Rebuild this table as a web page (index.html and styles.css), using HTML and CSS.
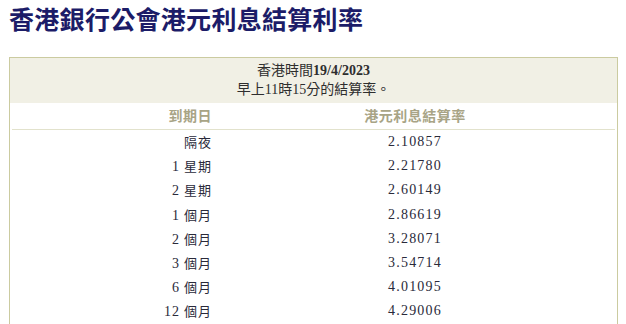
FILE: index.html
```html
<!DOCTYPE html>
<html lang="zh-Hant">
<head>
<meta charset="utf-8">
<link rel="stylesheet" href="styles.css">
</head>
<body>
<h1 class="title">香港銀行公會港元利息結算利率</h1>
<div class="box">
  <div class="band">
    <div>香港時間<b class="num">19/4/2023</b></div>
    <div>早上<span class="num">11</span>時<span class="num">15</span>分的結算率。</div>
  </div>
  <div class="grid">
    <div class="hd c1">到期日</div>
    <div class="hd c2">港元利息結算率</div>
    <div class="c1">隔夜</div><div class="c2 rate">2.10857</div>
    <div class="c1"><span class="num">1</span> 星期</div><div class="c2 rate">2.21780</div>
    <div class="c1"><span class="num">2</span> 星期</div><div class="c2 rate">2.60149</div>
    <div class="c1"><span class="num">1</span> 個月</div><div class="c2 rate">2.86619</div>
    <div class="c1"><span class="num">2</span> 個月</div><div class="c2 rate">3.28071</div>
    <div class="c1"><span class="num">3</span> 個月</div><div class="c2 rate">3.54714</div>
    <div class="c1"><span class="num">6</span> 個月</div><div class="c2 rate">4.01095</div>
    <div class="c1"><span class="num">12</span> 個月</div><div class="c2 rate">4.29006</div>
  </div>
</div>
</body>
</html>
```
FILE: styles.css
```css
body {
  margin: 0;
  background: #fff;
  font-family: "Liberation Serif", "Noto Sans CJK TC", serif;
}
.title {
  margin: 0;
  padding: 0 0 0 9px;
  height: 54px;
  box-sizing: border-box;
  font-family: "Noto Sans CJK TC", sans-serif;
  font-size: 25px;
  line-height: 36px;
  font-weight: 700;
  color: #1c1c68;
  letter-spacing: 0.3px;
}
.box {
  margin: 3px 0 0 9px;
  width: 607px;
  border: 1px solid #cbcba0;
  border-bottom: none;
  height: 280px;
}
.band {
  background: #f1f0e5;
  height: 45px;
  padding-top: 3px;
  box-sizing: border-box;
  text-align: center;
  font-size: 14px;
  line-height: 19px;
  color: #2e2e2e;
}
.num { font-family: "Liberation Serif", serif; }
.band b { font-weight: 700; }
.grid {
  display: grid;
  grid-template-columns: 203px 400px;
  padding: 0 2px;
  font-size: 14px;
  color: #2a2a3a;
}
.hd {
  font-family: "Noto Sans CJK TC", sans-serif;
  font-weight: 700;
  color: #a8a486;
  height: 26px;
  line-height: 24px;
  border-bottom: 1px solid #e2e2cc;
  letter-spacing: 0.5px;
}
.c1 { text-align: right; padding-right: 3px; }
.c2 { text-align: center; }
.grid > div:not(.hd) {
  height: 24.2px;
  line-height: 23px;
}
.grid > div.c1:not(.hd) {
  font-family: "Noto Sans CJK TC", sans-serif;
  font-size: 13px;
  letter-spacing: 1px;
}
.grid > div.c1 .num { font-size: 14px; }
.rate { letter-spacing: 1.2px; }
```
